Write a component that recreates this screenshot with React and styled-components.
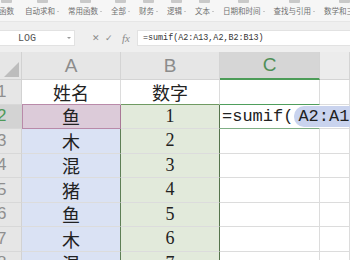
import React from "react";
import styled, { createGlobalStyle } from "styled-components";

const GlobalStyle = createGlobalStyle`
  html, body {
    margin: 0;
    padding: 0;
  }
  body {
    width: 350px;
    height: 260px;
    overflow: hidden;
    background: #ffffff;
    font-family: "Noto Sans CJK SC", sans-serif;
  }
`;

const ribbonItems = [
  { label: "函数", caret: false },
  { label: "自动求和", caret: true },
  { label: "常用函数", caret: true },
  { label: "全部", caret: true },
  { label: "财务", caret: true },
  { label: "逻辑", caret: true },
  { label: "文本", caret: true },
  { label: "日期和时间", caret: true },
  { label: "查找与引用", caret: true },
  { label: "数学和三角", caret: true },
];

const rows = [
  ["姓名", "数字"],
  ["鱼", "1"],
  ["木", "2"],
  ["混", "3"],
  ["猪", "4"],
  ["鱼", "5"],
  ["木", "6"],
  ["混", "7"],
];

const App = () => {
  return (
    <Page>
      <GlobalStyle />
      <Ribbon>
        {ribbonItems.map((item, i) => (
          <RibbonItem key={i} $first={i === 0}>
            <RibbonIcon />
            <RibbonLabel>
              {item.label}
              {item.caret && <Caret />}
            </RibbonLabel>
          </RibbonItem>
        ))}
      </Ribbon>

      <FormulaBar>
        <NameBox>
          LOG
          <Caret $big />
        </NameBox>
        <BarIcons>
          <BarIcon>✕</BarIcon>
          <BarIcon>✓</BarIcon>
          <Fx>fx</Fx>
        </BarIcons>
        <FormulaInput>=sumif(A2:A13,A2,B2:B13)</FormulaInput>
      </FormulaBar>

      <Sheet>
        <Corner>
          <CornerMark />
        </Corner>
        <ColHead>A</ColHead>
        <ColHead>B</ColHead>
        <ColHead $active>C</ColHead>
        <ColHead $dim />

        {rows.map((row, i) => {
          const n = i + 1;
          return (
            <React.Fragment key={n}>
              <RowHead $active={n === 2}>{n}</RowHead>
              <Cell
                $cjk
                $fill={n === 1 ? null : n === 2 ? "#dccbd9" : "#dae2f4"}
                $bottom={n === 1 ? "#b98aa9" : n === 2 ? "#b98aa9" : null}
                $right={n === 1 ? null : n === 2 ? "#a97896" : "#5e7f55"}
                $left={n === 2 ? "#b98aa9" : null}
              >
                {row[0]}
              </Cell>
              <Cell
                $cjk={n === 1}
                $fill={n === 1 ? null : "#e2eadb"}
                $bottom={n === 1 ? "#6f9a62" : null}
                $right={n === 1 ? null : "#56744d"}
              >
                {row[1]}
              </Cell>
              <Cell
                $bottom={n === 1 ? "#4f9e5c" : n === 2 ? "#7fae85" : null}
                $right={n === 2 ? "transparent" : null}
                $over={n === 2}
              >
                {n === 2 && (
                  <FormulaText>
                    =sumif(<RefPill>A2:A13</RefPill>
                  </FormulaText>
                )}
              </Cell>
              <Cell />
            </React.Fragment>
          );
        })}
      </Sheet>
    </Page>
  );
};

export default App;

const Page = styled.div`
  width: 350px;
  height: 260px;
  overflow: hidden;
`;

const Ribbon = styled.div`
  height: 22px;
  background: #f6f6f6;
  border-bottom: 1px solid #e6e6e6;
  box-sizing: border-box;
  display: flex;
  gap: 9px;
  overflow: hidden;
  white-space: nowrap;
`;

const RibbonItem = styled.div`
  display: flex;
  flex-direction: column;
  align-items: center;
  margin-left: ${(p) => (p.$first ? "-1px" : "0")};
  margin-right: ${(p) => (p.$first ? "2px" : "0")};
`;

const RibbonIcon = styled.div`
  width: 11px;
  height: 3px;
  background: #c9c9c9;
  border-radius: 0 0 1px 1px;
`;

const RibbonLabel = styled.div`
  margin-top: 2px;
  font-size: 7.5px;
  line-height: 12px;
  color: #707070;
  display: flex;
  align-items: center;
`;

const Caret = styled.span`
  display: inline-block;
  margin-left: ${(p) => (p.$big ? "auto" : "2px")};
  width: 0;
  height: 0;
  border-left: ${(p) => (p.$big ? "2px" : "1.5px")} solid transparent;
  border-right: ${(p) => (p.$big ? "2px" : "1.5px")} solid transparent;
  border-top: ${(p) => (p.$big ? "2px" : "1.5px")} solid #9a9a9a;
`;

const FormulaBar = styled.div`
  height: 30px;
  background: #efefef;
  display: flex;
  align-items: center;
  padding-top: 2px;
  box-sizing: border-box;
`;

const NameBox = styled.div`
  width: 75px;
  height: 16px;
  background: #ffffff;
  border: 1px solid #e2e2e2;
  border-left: none;
  box-sizing: border-box;
  display: flex;
  align-items: center;
  padding: 0 3px 0 18px;
  font-family: "Liberation Mono", monospace;
  font-size: 10px;
  color: #555555;
`;

const BarIcons = styled.div`
  display: flex;
  align-items: center;
  gap: 5px;
  padding-left: 17px;
  width: 62px;
  box-sizing: border-box;
`;

const BarIcon = styled.span`
  font-family: "DejaVu Sans", sans-serif;
  font-size: 9px;
  color: #8a8a8a;
  width: 8px;
`;

const Fx = styled.span`
  font-family: "Liberation Serif", serif;
  font-style: italic;
  font-size: 11px;
  color: #8a8a8a;
  margin-left: 4px;
`;

const FormulaInput = styled.div`
  flex: 1;
  height: 16px;
  background: #ffffff;
  border: 1px solid #e2e2e2;
  border-right: none;
  box-sizing: border-box;
  padding-left: 5px;
  display: flex;
  align-items: center;
  font-family: "Liberation Mono", monospace;
  font-size: 8.4px;
  color: #333333;
  white-space: nowrap;
  overflow: hidden;
`;

const Sheet = styled.div`
  display: grid;
  grid-template-columns: 22px 99px 99px 100px 1fr;
  grid-template-rows: 28px repeat(8, 24.5px);
`;

const Corner = styled.div`
  background: #e6e6e6;
  border-right: 1px solid #d2d2d2;
  border-bottom: 1px solid #d2d2d2;
  box-sizing: border-box;
  display: flex;
  align-items: flex-end;
  justify-content: flex-end;
  padding: 0 2px 2px 0;
`;

const CornerMark = styled.div`
  width: 0;
  height: 0;
  border-left: 15px solid transparent;
  border-bottom: 15px solid #bdbdbd;
`;

const ColHead = styled.div`
  background: ${(p) => (p.$active ? "#d6d6d6" : p.$dim ? "#ececec" : "#e6e6e6")};
  border-right: 1px solid #d4d4d4;
  border-bottom: ${(p) => (p.$active ? "2px solid #4c9c58" : "1px solid #d4d4d4")};
  box-sizing: border-box;
  display: flex;
  align-items: center;
  justify-content: center;
  font-family: "Liberation Sans", sans-serif;
  font-size: 19px;
  color: ${(p) => (p.$active ? "#4f8f58" : "#8c8c8c")};
`;

const RowHead = styled.div`
  background: ${(p) => (p.$active ? "#d3d3d3" : "#e6e6e6")};
  border-right: 1px solid #d2d2d2;
  border-bottom: 1px solid #d8d8d8;
  box-sizing: border-box;
  display: flex;
  align-items: center;
  overflow: hidden;
  font-family: "Liberation Sans", sans-serif;
  font-size: 17px;
  color: ${(p) => (p.$active ? "#4f9a59" : "#8f8f8f")};
  text-indent: -3px;
`;

const Cell = styled.div`
  position: relative;
  z-index: ${(p) => (p.$over ? 1 : 0)};
  background: ${(p) => p.$fill || "#ffffff"};
  border-right: 1px solid ${(p) => p.$right || "#dcdcdc"};
  border-bottom: 1px solid ${(p) => p.$bottom || "#dcdcdc"};
  box-shadow: ${(p) => (p.$left ? `inset 1px 0 0 ${p.$left}` : "none")};
  box-sizing: border-box;
  display: flex;
  align-items: center;
  justify-content: center;
  font-family: ${(p) =>
    p.$cjk ? `"Noto Sans CJK SC", sans-serif` : `"Liberation Serif", serif`};
  font-size: 18px;
  color: #222222;
  white-space: nowrap;
`;

const FormulaText = styled.div`
  position: absolute;
  left: 2px;
  top: 0;
  bottom: 0;
  display: flex;
  align-items: center;
  font-family: "Liberation Mono", monospace;
  font-size: 17px;
  color: #222222;
`;

const RefPill = styled.span`
  background: #c9d3ee;
  border-radius: 10px 0 0 10px;
  padding: 1px 0 1px 4px;
  margin-left: 1px;
`;
